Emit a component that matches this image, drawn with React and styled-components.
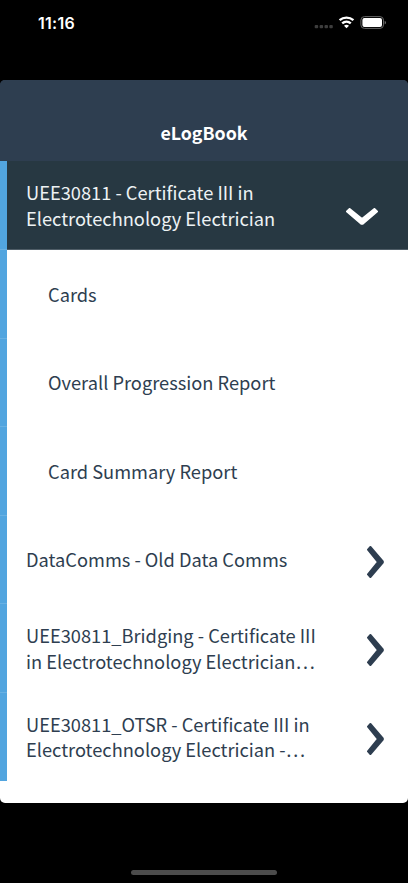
import React from "react";
import styled, { createGlobalStyle } from "styled-components";

const Global = createGlobalStyle`
  * { box-sizing: border-box; }
  body { margin: 0; background: #000; }
`;

const Screen = styled.div`
  width: 408px;
  height: 883px;
  display: flex;
  flex-direction: column;
  overflow: hidden;
  background: #000;
  font-family: "Noto Sans CJK SC", "Noto Sans", sans-serif;
`;

const StatusBar = styled.div`
  height: 80px;
  flex: none;
  display: flex;
  justify-content: space-between;
  align-items: flex-start;
  padding: 13px 22px 0 38px;
`;

const Clock = styled.span`
  color: #fff;
  font: 600 16px/20px Inter, sans-serif;
  letter-spacing: 0.25px;
`;

const StatusIcons = styled.svg`
  display: block;
  flex: none;
`;

const Sheet = styled.main`
  height: 723px;
  flex: none;
  border-radius: 5px;
  overflow: hidden;
  background: linear-gradient(#2e3e50 50%, #fff 50%);
`;

const Header = styled.header`
  height: 81.4px;
  padding-top: 39px;
  background: #2e3e50;
  text-align: center;
`;

const Title = styled.h1`
  margin: 0;
  color: #fff;
  font-size: 17.8px;
  line-height: 27px;
  font-weight: 700;
`;

const Row = styled.div`
  height: 88.57px;
  display: flex;
  align-items: stretch;
  background: ${(p) => (p.$open ? "#273842" : "#fff")};
  color: ${(p) => (p.$open ? "#edf2f4" : "#2e3e50")};
`;

const Marker = styled.div`
  width: 7px;
  flex: none;
  background: #52a5df;
  border-bottom: ${(p) => (p.$last ? "none" : "1px solid #69b1e3")};
`;

const RowBody = styled.div`
  flex: 1;
  display: flex;
  align-items: center;
  justify-content: space-between;
  border-bottom: 1px solid ${(p) => (p.$open ? "#4f5d67" : "#fff")};
  padding: 1.4px ${(p) => (p.$open ? 30 : 24.5)}px 0 ${(p) => (p.$nested ? 41 : 19)}px;
`;

const Label = styled.div`
  font-size: 18.25px;
  line-height: 25.5px;
  white-space: nowrap;
`;

const Line = styled.span`
  display: block;
  width: max-content;
`;

const Chevron = styled.svg`
  display: block;
  flex: none;
  margin-top: ${(p) => (p.$open ? 22 : 3.5)}px;
  fill: currentColor;
  stroke: currentColor;
  stroke-width: 2;
  stroke-linejoin: round;
`;

const Footer = styled.footer`
  flex: 1;
  display: flex;
  justify-content: center;
  align-items: flex-end;
  padding-bottom: 8px;
`;

const HomeIndicator = styled.div`
  width: 146px;
  height: 5px;
  border-radius: 3px;
  background: #4c4c4c;
`;

const rows = [
  { lines: ["UEE30811 - Certificate III in", "Electrotechnology Electrician"], open: true },
  { lines: ["Cards"], nested: true },
  { lines: ["Overall Progression Report"], nested: true },
  { lines: ["Card Summary Report"], nested: true },
  { lines: ["DataComms - Old Data Comms"] },
  { lines: ["UEE30811_Bridging - Certificate III", "in Electrotechnology Electrician…"] },
  { lines: ["UEE30811_OTSR - Certificate III in", "Electrotechnology Electrician -…"] },
];

function RowIcon({ open }) {
  return open ? (
    <Chevron $open width="32" height="17" viewBox="0 0 32 17">
      <path d="M1 3.4 3.6 1 16 11.1 28.4 1 31 3.4 16.7 15.8H15.3Z" color="#fff" />
    </Chevron>
  ) : (
    <Chevron width="17" height="32" viewBox="0 0 17 32">
      <path d="M3.4 1 1 3.6 10.9 16 1 28.4 3.4 31 15.8 16.7V15.3Z" />
    </Chevron>
  );
}

export default function App() {
  return (
    <Screen>
      <Global />
      <StatusBar>
        <Clock>11:16</Clock>
        <StatusIcons width="74" height="18" viewBox="0 0 74 18">
          <g fill="#3d3d3d">
            <rect x="2.7" y="12" width="3.5" height="3.3" rx="1" />
            <rect x="7.6" y="12" width="3.5" height="3.3" rx="1" />
            <rect x="12.5" y="12" width="3.5" height="3.3" rx="1" />
            <rect x="17.3" y="12" width="3.5" height="3.3" rx="1" />
          </g>
          <g fill="none" stroke="#fff" strokeWidth="2.4">
            <path d="M27.6 7.2a10.4 10.4 0 0 1 13.8 0" />
            <path d="M30.2 10.4a6.5 6.5 0 0 1 8.6 0" />
          </g>
          <path d="M34.5 15.3 32 12.8a3.7 3.7 0 0 1 5 0z" fill="#fff" />
          <rect x="48.9" y="3.6" width="22.6" height="11.8" rx="3.5" fill="none" stroke="#666" />
          <rect x="50.4" y="5.1" width="19.6" height="8.8" rx="2" fill="#fff" />
          <path d="M72.7 7.7a2 2 0 0 1 0 3.7z" fill="#777" />
        </StatusIcons>
      </StatusBar>
      <Sheet>
        <Header>
          <Title>eLogBook</Title>
        </Header>
        {rows.map((row, index) => (
          <Row key={row.lines[0]} $open={row.open}>
            <Marker $last={index === rows.length - 1} />
            <RowBody $open={row.open} $nested={row.nested}>
              <Label>
                {row.lines.map((line) => (
                  <Line key={line}>{line}</Line>
                ))}
              </Label>
              {!row.nested && <RowIcon open={row.open} />}
            </RowBody>
          </Row>
        ))}
      </Sheet>
      <Footer>
        <HomeIndicator />
      </Footer>
    </Screen>
  );
}
